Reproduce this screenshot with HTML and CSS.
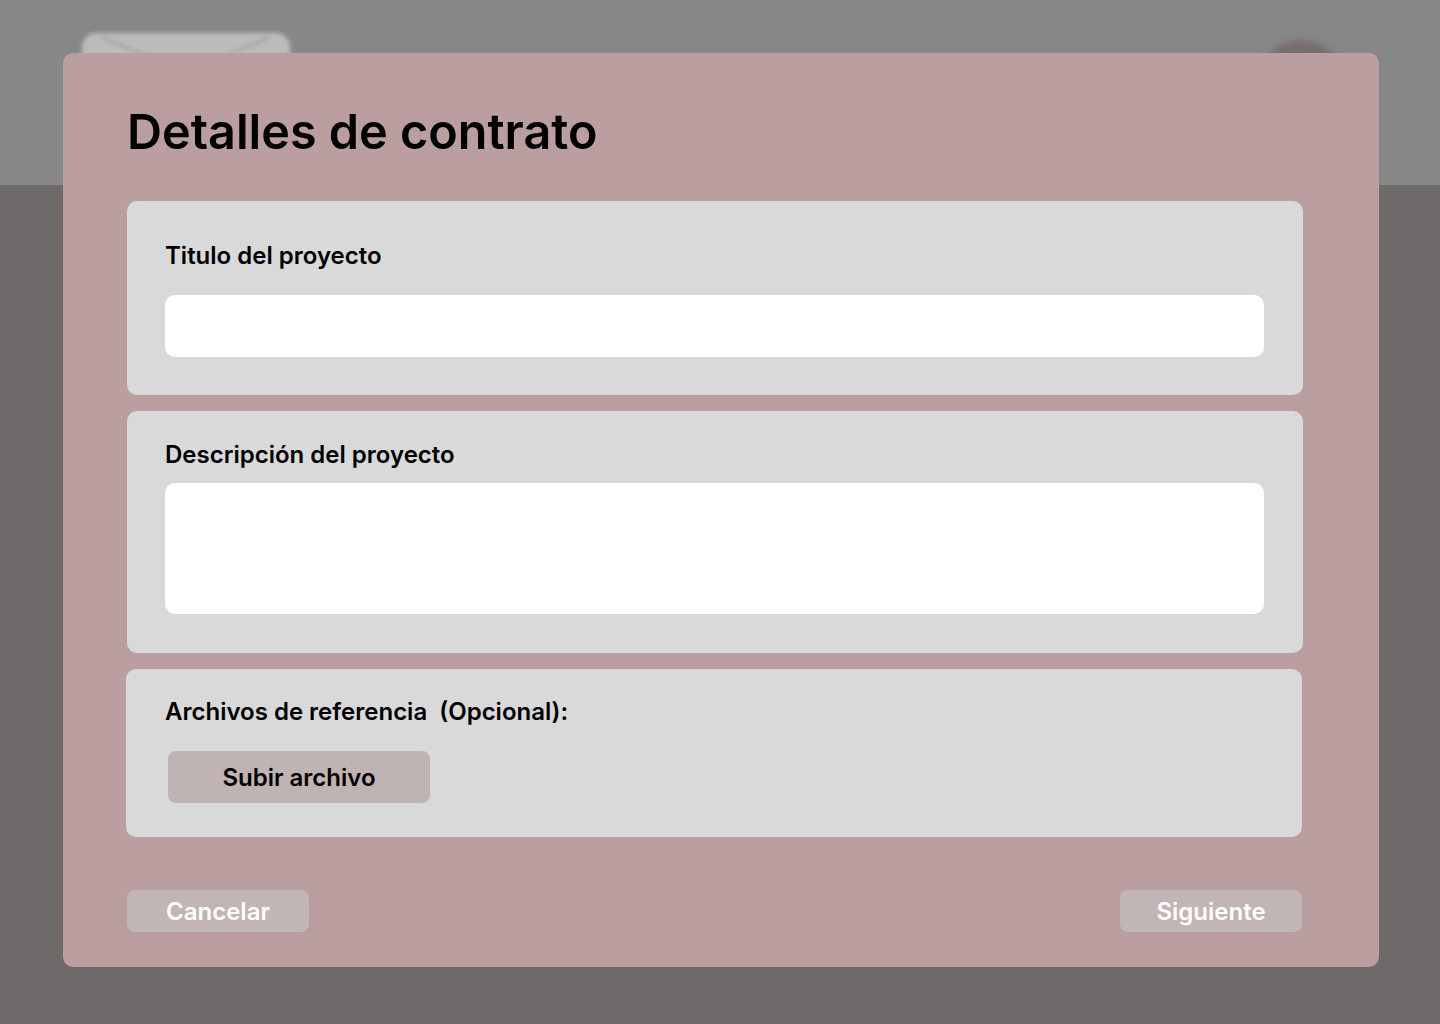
FILE: index.html
```html
<!DOCTYPE html>
<html lang="es">
<head>
<meta charset="utf-8">
<title>Detalles de contrato</title>
<link rel="stylesheet" href="styles.css">
</head>
<body>
<div class="page">
  <header class="topbar">
    <div class="mail-btn">
      <svg class="mail-icon" viewBox="0 0 208 40" width="208" height="40"><path d="M20 4 L104 40 L188 4" fill="none" stroke="#a9a6a6" stroke-width="3"/></svg>
    </div>
    <div class="avatar"></div>
  </header>
  <main class="content"></main>
</div>

<div class="overlay">
  <section class="modal">
    <h1 class="modal-title">Detalles de contrato</h1>
    <div class="card card-title">
      <label class="field-label">Titulo del proyecto</label>
      <div class="input input-short"></div>
    </div>
    <div class="card card-desc">
      <label class="field-label">Descripción del proyecto</label>
      <div class="input input-tall"></div>
    </div>
    <div class="card card-files">
      <label class="field-label">Archivos de referencia&nbsp; (Opcional):</label>
      <button class="upload-btn">Subir archivo</button>
    </div>
    <div class="modal-footer">
      <button class="footer-btn">Cancelar</button>
      <button class="footer-btn">Siguiente</button>
    </div>
  </section>
</div>
</body>
</html>
```

FILE: styles.css
```css
* { box-sizing: border-box; }
html, body {
  margin: 0;
  padding: 0;
}
body {
  width: 1440px;
  height: 1024px;
  overflow: hidden;
  background: #6d6a69;
  font-family: Inter, "Noto Sans", sans-serif;
  position: relative;
}
.page {
  display: flex;
  flex-direction: column;
  height: 100%;
}
.topbar {
  height: 185px;
  background: #878787;
  position: relative;
  flex: none;
}
.mail-btn {
  position: absolute;
  left: 82px;
  top: 33px;
  width: 208px;
  height: 90px;
  border-radius: 14px;
  background: #bdbaba;
  filter: blur(2px);
}
.mail-icon {
  display: block;
}
.avatar {
  position: absolute;
  left: 1258px;
  top: 40px;
  width: 86px;
  height: 86px;
  border-radius: 50%;
  background: #786d6d;
  filter: blur(3px);
}
.content {
  flex: 1;
}
.overlay {
  position: absolute;
  inset: 0;
}
.modal {
  position: absolute;
  left: 63px;
  top: 53px;
  width: 1316px;
  height: 914px;
  background: #bb9fa0;
  border-radius: 10px;
  padding: 50px 76px 0 64px;
  display: flex;
  flex-direction: column;
}
.modal-title {
  margin: 0 0 40px 0;
  font-size: 48.5px;
  line-height: 58px;
  font-weight: 600;
  color: #000;
  letter-spacing: 0;
}
.card {
  background: #d9d9d9;
  border-radius: 10px;
  padding: 0 39px 0 38px;
  display: flex;
  flex-direction: column;
}
.card + .card {
  margin-top: 16px;
}
.card-title {
  padding-top: 40px;
  padding-bottom: 38px;
}
.card-desc {
  padding-top: 29px;
  padding-bottom: 39px;
}
.card-files {
  padding-top: 28px;
  padding-bottom: 34px;
  align-items: flex-start;
  margin-right: 1px;
  margin-left: -1px;
  padding-left: 39px;
}
.field-label {
  font-size: 24px;
  line-height: 30px;
  font-weight: 600;
  color: #000;
}
.input {
  background: #fff;
  border-radius: 10px;
}
.input-short {
  height: 62px;
  margin-top: 24px;
}
.input-tall {
  height: 131px;
  margin-top: 13px;
}
.upload-btn {
  margin-top: 24px;
  margin-left: 3px;
  width: 262px;
  height: 52px;
  border: 0;
  border-radius: 8px;
  background: #c0b3b3;
  font-family: inherit;
  font-size: 24px;
  font-weight: 600;
  color: #000;
  padding: 0;
}
.modal-footer {
  margin-top: 53px;
  margin-right: 1px;
  display: flex;
  justify-content: space-between;
}
.footer-btn {
  width: 182px;
  height: 42px;
  border: 0;
  border-radius: 8px;
  background: #c1b5b5;
  color: #fff;
  font-family: inherit;
  font-size: 24px;
  font-weight: 600;
  padding: 0;
}
```
